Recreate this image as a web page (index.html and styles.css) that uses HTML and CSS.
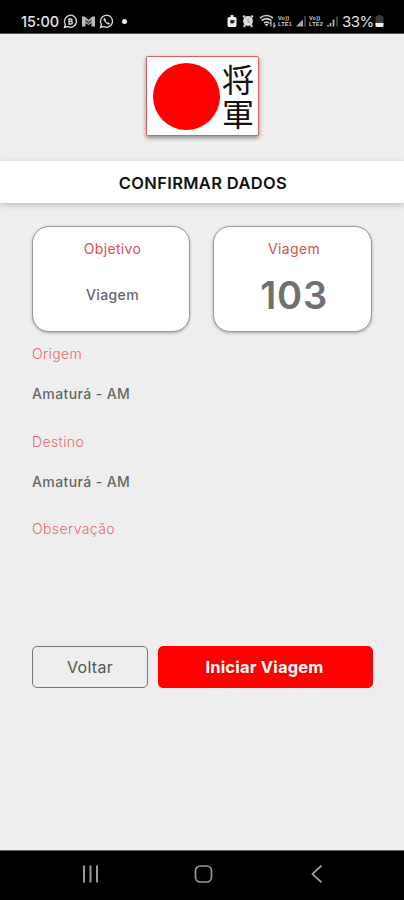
FILE: index.html
```html
<!DOCTYPE html>
<html lang="pt-BR">
<head>
<meta charset="utf-8">
<meta name="viewport" content="width=device-width, initial-scale=1">
<title>Confirmar dados</title>
<link rel="stylesheet" href="styles.css">
</head>
<body>
<div class="screen">
  <header class="status">
    <div class="status-left">
      <span class="clock">15:00</span>
      <svg class="app-icon" width="15" height="15" viewBox="0 0 15 15"><path d="M1.500 13.500l.9-3.200a6 6 0 1 1 2.300 2.200z" fill="none" stroke="#ddd" stroke-width="1.300"/><path d="M6 10V5h1.800a1.200 1.200 0 0 1 0 2.400H6h2a1.300 1.300 0 0 1 0 2.600z" fill="none" stroke="#ddd" stroke-width="1.300"/></svg>
      <svg class="app-icon" width="15" height="15" viewBox="0 0 15 15"><path d="M1 2.500h2.500l4 3.500 4-3.500H14v10h-3.500V9l-3 2-3-2v3.500H1z" fill="#bbb"/><path d="M4.500 5v3l3 2 3-2V5l-3 2.500z" fill="#555"/></svg>
      <svg class="app-icon" width="15" height="15" viewBox="0 0 15 15"><path d="M1.500 13.500l.9-3.200a6 6 0 1 1 2.300 2.200z" fill="none" stroke="#ddd" stroke-width="1.300"/><path d="M5.200 4.200c-1 1 .2 3 1.500 4.300s3.300 2.400 4.100 1.300l-1.700-1.400-1 .7-2-2 .7-1z" fill="#ddd" stroke="#ddd" stroke-width=".7"/></svg>
      <span class="dot"></span>
    </div>
    <div class="status-right">
      <svg width="10" height="14" viewBox="0 0 10 14"><path d="M3.500 1h3v2h1.500a1.500 1.500 0 0 1 1.500 1.500v7A1.500 1.500 0 0 1 8 13H2a1.500 1.500 0 0 1-1.500-1.500v-7A1.500 1.500 0 0 1 2 3h1.500z" fill="#eee"/><circle cx="5" cy="7.700" r="1.900" fill="#222"/><path d="M5 7.700l2.500-2v3z" fill="#222"/></svg>
      <svg class="alarm" width="12" height="14" viewBox="0 0 12 14"><path d="M1 3l2-1M11 3L9 2M1.500 12.500l2-1.500M10.500 12.500l-2-1.500" stroke="#ccc" stroke-width="2.200"/><circle cx="6" cy="7" r="4.900" fill="#ddd"/><path d="M6 4.500V7.500l2 1" fill="none" stroke="#888"/></svg>
      <svg class="wifi" width="18" height="14" viewBox="0 0 18 14"><path d="M1 4q6.500-5 13 0M2.700 6.500q4.800-3.700 9.600 0M5 9q2.500-1.800 5 0" fill="none" stroke="#ccc" stroke-width="1.600"/><path d="M7.500 12.500l-2-2.500h4z" fill="#ccc"/><path d="M12 12.500V8l-1.300 2M15 8.500V13l1.400-2" fill="none" stroke="#bbb" stroke-width="1.200"/></svg>
      <span class="volte"><span>Vo))</span><span>LTE1</span></span>
      <svg class="signal" width="12" height="14" viewBox="0 0 12 14"><path d="M1 12.500L8 5.500v7z" fill="#aaa"/><path d="M10 12.500V2" stroke="#3c3c3c" stroke-width="2"/></svg>
      <span class="volte second"><span>Vo))</span><span>LTE2</span></span>
      <svg class="signal" width="13" height="14" viewBox="0 0 13 14"><path d="M2 12.500V11M4.500 12.500V9M7.500 12.500V5.500" stroke="#bbb" stroke-width="1.700"/><path d="M11 12.500V2.500" stroke="#555" stroke-width="1.500"/></svg>
      <span class="percent">33%</span>
      <svg class="battery" width="9" height="14" viewBox="0 0 9 14"><path d="M3 1h3v1h1.500l1 1v9l-1 1h-6l-1-1V3l1-1H3z" fill="#383838"/><path d="M.5 9h8v3l-1 1h-6l-1-1z" fill="#eee"/></svg>
    </div>
  </header>

  <div class="brand">
    <div class="logo"><span class="sun"></span><span class="kanji" lang="ja">将軍</span></div>
  </div>
  <h1 class="title">CONFIRMAR DADOS</h1>

  <main class="content">
    <div class="cards">
      <section class="card"><h2>Objetivo</h2><p>Viagem</p></section>
      <section class="card"><h2>Viagem</h2><p class="number">103</p></section>
    </div>
    <dl class="details">
      <dt>Origem</dt><dd>Amaturá - AM</dd>
      <dt>Destino</dt><dd>Amaturá - AM</dd>
      <dt>Observação</dt><dd></dd>
    </dl>
    <div class="actions">
      <button class="back" type="button">Voltar</button>
      <button class="start" type="button">Iniciar Viagem</button>
    </div>
  </main>

  <nav class="navigation">
    <svg width="20" height="20" viewBox="0 0 20 20"><path d="M3 1.500v17M9.500 1.500v17M16 1.500v17" stroke="#999" stroke-width="2"/></svg>
    <svg width="20" height="20" viewBox="0 0 20 20"><rect x="1.500" y="2" width="16" height="16" rx="4.700" fill="none" stroke="#999" stroke-width="1.700"/></svg>
    <svg width="20" height="20" viewBox="0 0 20 20"><path d="M14.500 1.700L5.500 10l9 8.300" fill="none" stroke="#aaa" stroke-width="1.700"/></svg>
  </nav>
</div>
</body>
</html>
```
FILE: styles.css
```css
* { box-sizing: border-box; }
body { margin: 0; font-family: Inter, "Liberation Sans", sans-serif; background: #eee; }
h1, h2, p, dl, dd { margin: 0; }
svg { display: block; flex: none; }
.screen { width: 404px; height: 900px; display: flex; flex-direction: column; background: #eee; overflow: hidden; }
.status { height: 34px; flex: none; display: flex; justify-content: space-between; padding: 8px 20px 0 21px; background: #000; color: #e4e4e4; border-bottom: 1px solid #555; }
.status-left, .status-right { display: flex; align-items: center; height: 26px; }
.clock { width: 42px; font-size: 14.5px; font-weight: 500; }
.app-icon { margin-right: 3px; }
.dot { width: 5px; height: 5px; margin-left: 5px; border-radius: 50%; background: #eee; }
.alarm { margin-left: 5px; }
.wifi { margin-left: 5px; }
.volte { width: 16px; display: flex; flex-direction: column; font: 700 5.6px/6.5px "Liberation Sans", sans-serif; letter-spacing: .2px; color: #ccc; }
.wifi + .volte { margin-left: 1px; }
.signal { margin-left: 1px; }
.second { margin-left: 2px; }
.percent { width: 33px; margin-left: 3px; font-size: 15px; letter-spacing: -.5px; }
.brand { height: 127px; flex: none; padding-top: 22px; }
.logo { width: 113px; height: 80px; margin-left: 146px; display: flex; align-items: center; padding-left: 6px; background: #fff; border: 1px solid #dc6060; border-radius: 2px; box-shadow: 0 2px 4px #888; }
.sun { flex: none; width: 67px; height: 67px; border-radius: 50%; background: #f00; }
.kanji { height: 68px; line-height: 36px; margin-top: 3px; writing-mode: vertical-rl; color: #111; font-family: "Noto Sans CJK JP", sans-serif; font-size: 32px; letter-spacing: 1.5px; white-space: nowrap; }
.title { height: 42px; flex: none; background: #fff; box-shadow: 0 2px 6px rgba(0,0,0,.2); text-align: center; font-size: 16.5px; line-height: 44px; font-weight: 600; letter-spacing: .35px; color: #111; padding-left: 2px; }
.content { flex: 1; padding: 23px 31px 0 32px; }
.cards { display: grid; grid-template-columns: 158px 159px; column-gap: 23px; }
.card { height: 106px; border: 1px solid #999; border-radius: 17px; background: #fff; box-shadow: 0 1px 3px rgba(0,0,0,.3); text-align: center; padding-top: 12px; }
.card h2 { color: #dc4c54; font-size: 14px; line-height: 20px; font-weight: 400; letter-spacing: .35px; padding-left: 3px; }
.card p { height: 50px; margin-top: 11px; padding-left: 3px; color: #666; font-size: 14px; line-height: 50px; font-weight: 500; letter-spacing: .4px; }
.card .number { font-size: 38px; font-weight: 600; letter-spacing: .8px; color: #707070; }
.details { padding-top: 12px; letter-spacing: .4px; font-size: 14px; line-height: 20px; }
.details dt { color: #e26b72; font-weight: 300; }
.details dd { height: 47.5px; padding-top: 20px; margin-bottom: 20px; color: #666; font-weight: 500; }
.actions { display: grid; grid-template-columns: 116px 215px; gap: 10px; margin-top: 59px; }
.actions button { height: 42px; border-radius: 5px; font-family: inherit; font-size: 16px; padding: 0; }
.actions .back { border: 1px solid #777; background: #eee; color: #555; letter-spacing: .3px; }
.actions .start { border: 1px solid #f00; background: #f00; color: #fff; font-size: 16.5px; font-weight: 700; letter-spacing: .2px; padding-right: 2px; }
.navigation { height: 50px; flex: none; display: grid; grid-template-columns: repeat(3, 20px); column-gap: 93px; align-items: center; padding: 0 0 4px 81px; background: #000; border-top: 1px solid #666; }
```
